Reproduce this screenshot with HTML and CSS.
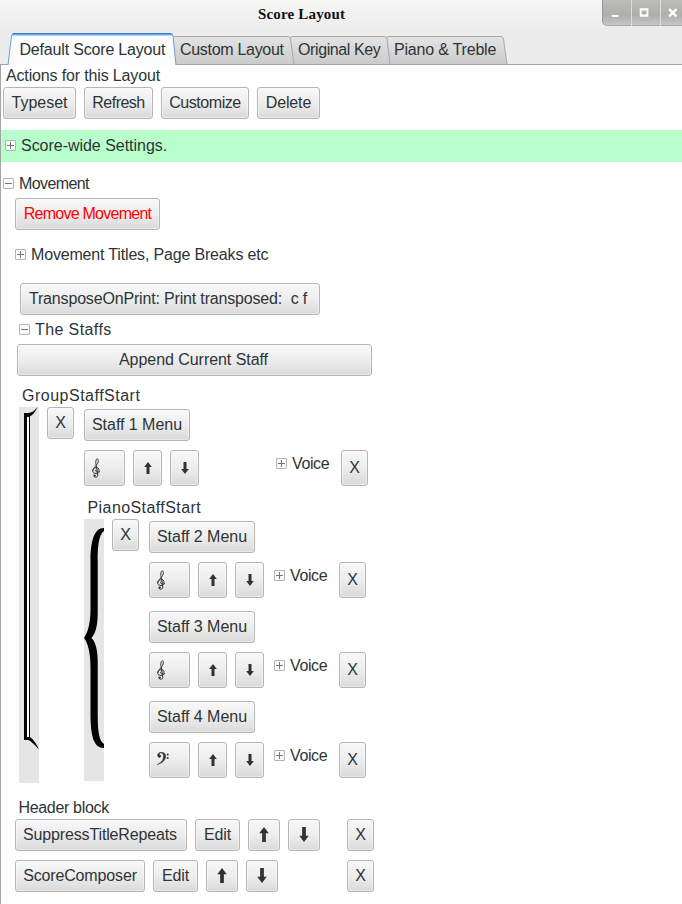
FILE: index.html
```html
<!DOCTYPE html>
<html lang="en">
<head>
<meta charset="utf-8">
<title>Score Layout</title>
<link rel="stylesheet" href="styles.css">
</head>
<body>
<svg class="defs" aria-hidden="true">
  <symbol id="up" viewBox="0 0 8 12"><path d="M4 0 7.800 5H5.500V12H2.500V5H.2Z"/></symbol>
  <symbol id="down" viewBox="0 0 8 12"><path d="M4 12 .2 7H2.500V0H5.500V7H7.800Z"/></symbol>
  <symbol id="treble" viewBox="0 0 9 20"><path fill="none" stroke="currentColor" stroke-width="1" d="M4.600 11.200C3.200 11.800 3.400 13.800 5 14 7.600 14 7.800 9.600 4.700 9.600 1.800 9.600.7 11.600.7 13 .7 16.300 7.500 16.200 7.500 13M.7 13C.7 9.500 6.700 6.700 6.300 2.500 6.100.3 5 .2 4.200 1.900 3.200 4.200 4.200 7 4.800 10L5.800 17.200C6 19.600 2.600 19.900 2 18"/><circle cx="2.600" cy="17.600" r="1.200"/></symbol>
  <symbol id="bass" viewBox="0 0 12 13"><path stroke="currentColor" stroke-width=".5" d="M.3 12.500C4.500 10.500 6.500 8 6.500 4.300 6.500 1.800 5.500 1 4.100 1 2.800 1 2 1.700 1.700 2.600 2.900 2.200 3.900 3.100 3.800 4.200 3.600 6 .7 5.800.6 3.500.5 1.300 2.300.3 4.400.3 7.200.3 8.700 2 8.700 4.300 8.700 8.300 4.700 11.500.3 12.500Z"/><circle cx="10.700" cy="2.500" r="1"/><circle cx="10.700" cy="5.900" r="1"/></symbol>
</svg>

<header class="titlebar">
  <h1 class="title">Score Layout</h1>
  <div class="controls">
    <svg class="control" viewBox="0 0 29 26"><path d="M9 15H16V17H9Z"/></svg>
    <svg class="control" viewBox="0 0 29 26"><path fill-rule="evenodd" d="M8 8H17V17H8ZM10 10.500V14.500H15V10.500Z"/></svg>
    <svg class="control" viewBox="0 0 29 26"><path class="cross" d="M8.500 9 16 16.500M16 9 8.500 16.500"/></svg>
  </div>
</header>

<nav class="tabs">
  <svg class="tab-shapes" viewBox="0 0 682 34">
    <defs>
      <linearGradient id="idle" x2="0" y2="1"><stop stop-color="#e4e4e4"/><stop offset="1" stop-color="#cbcbcb"/></linearGradient>
    </defs>
    <path class="baseline" d="M0 33.500H682"/>
    <path class="idle" d="M386 33V8Q386 5.500 389 5.500H501Q503 5.500 503.500 8L507 33"/>
    <path class="idle" d="M290 33V8Q290 5.500 293 5.500H384Q386.500 5.500 387 8L390 33"/>
    <path class="idle" d="M172 33V5.500H288Q290 5.500 290.500 8L294 33"/>
    <path class="current" d="M8 34 11.500 5Q12 2.500 14 2.500H170Q172.500 2.500 173 5L176 34"/>
    <path class="accent" d="M12 3.500H172.500"/>
    <path class="accent-top" d="M13 2.500H171.500"/>
  </svg>
  <span class="tab tab-default">Default Score Layout</span>
  <span class="tab tab-custom">Custom Layout</span>
  <span class="tab tab-key">Original Key</span>
  <span class="tab tab-piano">Piano &amp; Treble</span>
</nav>

<main class="page">
  <div class="label actions-label">Actions for this Layout</div>
  <div class="row actions">
    <button class="btn w73">Typeset</button>
    <button class="btn w69">Refresh</button>
    <button class="btn w88">Customize</button>
    <button class="btn w63">Delete</button>
  </div>

  <div class="expander scorewide"><i class="box plus"></i><span>Score-wide Settings.</span></div>
  <div class="expander movement"><i class="box"></i><span>Movement</span></div>
  <button class="btn remove">Remove Movement</button>
  <div class="expander titles"><i class="box plus"></i><span>Movement Titles, Page Breaks etc</span></div>
  <button class="btn transpose">TransposeOnPrint: Print transposed: &nbsp;c f</button>
  <div class="expander staffs"><i class="box"></i><span>The Staffs</span></div>
  <button class="btn append">Append Current Staff</button>

  <div class="label group-label">GroupStaffStart</div>
  <section class="group">
    <svg class="bracket" viewBox="0 0 20 376">
      <path d="M5 7V333H8V7ZM10 8V331H11V8Z"/>
      <path class="gap" d="M8 10H10V331H8Z"/>
      <path d="M5 10V6H9C13 6 16 3 18.500 0 16 5.500 13 9.500 8.500 10Z"/>
      <path d="M5 330H11C15 333 18 338 20 342.500 16.500 338.500 12 334 9 333H5Z"/>
    </svg>
    <button class="btn x">X</button>
    <div class="members">
      <button class="btn menu">Staff 1 Menu</button>
      <div class="row staff outer">
        <button class="btn clef"><svg class="treble"><use href="#treble"/></svg></button>
        <button class="btn move"><svg class="arrow"><use href="#up"/></svg></button>
        <button class="btn move"><svg class="arrow"><use href="#down"/></svg></button>
        <div class="expander voice"><i class="box plus"></i><span>Voice</span></div>
        <button class="btn x">X</button>
      </div>
      <div class="label piano-label">PianoStaffStart</div>
      <section class="group piano">
        <svg class="brace" viewBox="0 0 20 262">
          <path d="M20 9C10 9 6.500 22 6.500 42V90C6.500 104 4 113 0 119 4 124 6.500 134 6.500 148V195C6.500 218 10 229 20 229V225C15 222 13.700 212 13.700 195V142C13.700 130 11 122 7.500 119 11 115 13.700 108 13.700 94V42C13.700 22 16 15 20 12Z"/>
        </svg>
        <button class="btn x">X</button>
        <div class="members">
          <button class="btn menu">Staff 2 Menu</button>
          <div class="row staff">
            <button class="btn clef"><svg class="treble"><use href="#treble"/></svg></button>
            <button class="btn move"><svg class="arrow"><use href="#up"/></svg></button>
            <button class="btn move"><svg class="arrow"><use href="#down"/></svg></button>
            <div class="expander voice"><i class="box plus"></i><span>Voice</span></div>
            <button class="btn x">X</button>
          </div>
          <button class="btn menu">Staff 3 Menu</button>
          <div class="row staff">
            <button class="btn clef"><svg class="treble"><use href="#treble"/></svg></button>
            <button class="btn move"><svg class="arrow"><use href="#up"/></svg></button>
            <button class="btn move"><svg class="arrow"><use href="#down"/></svg></button>
            <div class="expander voice"><i class="box plus"></i><span>Voice</span></div>
            <button class="btn x">X</button>
          </div>
          <button class="btn menu">Staff 4 Menu</button>
          <div class="row staff">
            <button class="btn clef"><svg class="bass"><use href="#bass"/></svg></button>
            <button class="btn move"><svg class="arrow"><use href="#up"/></svg></button>
            <button class="btn move"><svg class="arrow"><use href="#down"/></svg></button>
            <div class="expander voice"><i class="box plus"></i><span>Voice</span></div>
            <button class="btn x">X</button>
          </div>
        </div>
      </section>
    </div>
  </section>

  <div class="label header-label">Header block</div>
  <div class="row header-row">
    <button class="btn w172">SuppressTitleRepeats</button>
    <button class="btn w45">Edit</button>
    <button class="btn w32"><svg class="arrow big"><use href="#up"/></svg></button>
    <button class="btn w32"><svg class="arrow big"><use href="#down"/></svg></button>
    <button class="btn x end">X</button>
  </div>
  <div class="row header-row">
    <button class="btn w130">ScoreComposer</button>
    <button class="btn w45">Edit</button>
    <button class="btn w32"><svg class="arrow big"><use href="#up"/></svg></button>
    <button class="btn w32"><svg class="arrow big"><use href="#down"/></svg></button>
    <button class="btn x end">X</button>
  </div>
</main>
</body>
</html>
```
FILE: styles.css
```css
* { box-sizing: border-box; }
html, body { height: 904px; overflow: hidden; }
body {
  margin: 0;
  background: #ececec;
  color: #2e3436;
  font: 16px/20px "Liberation Sans", Arial, sans-serif;
  letter-spacing: -0.15px;
}
svg { display: block; fill: currentColor; }
.defs { position: absolute; width: 0; height: 0; }

.titlebar {
  display: flex;
  height: 31px;
  overflow: hidden;
  background: linear-gradient(#f6f6f5, #ececec);
}
.title {
  flex: none;
  width: 602px;
  margin: 0;
  padding-left: 258px;
  color: #111;
  font: bold 15px/29px "Liberation Serif", serif;
  letter-spacing: 0.17px;
}
.controls {
  display: flex;
  flex: none;
  width: 89px;
  height: 26px;
  border: 1px solid #999;
  border-top: 0;
  border-bottom-color: #aaa;
  border-radius: 0 0 0 5px;
  background: linear-gradient(#bcbcba, #aeaeac 60%, #c6c6c4);
}
.control { flex: none; width: 29px; height: 26px; fill: #fff; border-right: 1px solid #ddd; }
.cross { stroke: #fff; stroke-width: 2.5; }

.tabs { position: relative; display: flex; height: 34px; }
.tab-shapes { position: absolute; inset: 0; width: 682px; height: 34px; }
.baseline { stroke: #9fa5a5; }
.idle { fill: url(#idle); stroke: #a4aaaa; }
.current { fill: #fcfcfc; stroke: #6a9fd6; }
.accent { fill: none; stroke: #63a7f0; stroke-width: 2; }
.accent-top { fill: none; stroke: #3a7bd0; }
.tab { position: relative; padding-top: 9px; white-space: nowrap; }
.tab-default { width: 160.5px; margin-left: 19.5px; letter-spacing: -0.18px; }
.tab-custom { width: 118px; letter-spacing: -0.3px; }
.tab-key { width: 96px; letter-spacing: -0.4px; }
.tab-piano { letter-spacing: -0.2px; }

.page {
  display: flex;
  flex-direction: column;
  align-items: flex-start;
  height: 839px;
  border-left: 1px solid #9fa5a5;
  background: #fff;
}
.label { height: 20px; white-space: nowrap; }
.row { display: flex; gap: 8px; }
.btn {
  display: flex;
  flex: none;
  align-items: center;
  justify-content: center;
  height: 32px;
  padding: 0 0 1px;
  border: 1px solid #b5b5b5;
  border-radius: 3px;
  background: linear-gradient(#f8f8f8, #ededed 50%, #dadada);
  box-shadow: inset 0 0 0 1px rgba(255, 255, 255, .4);
  color: inherit;
  font: inherit;
  letter-spacing: inherit;
  white-space: nowrap;
}
.w32 { width: 32px; }
.w45 { width: 45px; }
.w63 { width: 63px; }
.w69 { width: 69px; letter-spacing: -0.5px; }
.w73 { width: 73px; letter-spacing: 0; }
.w88 { width: 88px; letter-spacing: -0.45px; }
.w130 { width: 130px; }
.w172 { width: 172px; padding-right: 2px; }
.x { width: 27px; }

.expander { display: flex; align-items: center; gap: 5px; height: 20px; white-space: nowrap; }
.box {
  flex: none;
  width: 11px;
  height: 11px;
  margin-bottom: 1px;
  border: 1px solid #b4b4b4;
  border-radius: 1px;
  background: linear-gradient(#777, #777) center / 7px 1px no-repeat, #fbfbfb;
}
.plus {
  background:
    linear-gradient(#777, #777) center / 7px 1px no-repeat,
    linear-gradient(#777, #777) center / 1px 7px no-repeat,
    #fbfbfb;
}

.actions-label { margin: 1px 0 1px 5px; }
.actions { margin-left: 2px; }
.scorewide { align-self: stretch; height: 32px; margin-top: 11px; padding-left: 4px; background: #b9ffcb; letter-spacing: -0.03px; }
.movement { margin: 12px 0 4px 2px; letter-spacing: -0.6px; }
.remove { width: 145px; margin-left: 14px; color: #f00; letter-spacing: -0.75px; }
.titles { margin: 15px 0 18px 14px; letter-spacing: -0.17px; }
.transpose { width: 300px; margin-left: 19px; padding-right: 4px; letter-spacing: -0.17px; }
.staffs { margin: 5px 0 4px 18px; letter-spacing: 0.4px; }
.append { width: 355px; margin-left: 16px; padding-right: 2px; letter-spacing: -0.05px; }
.group-label { margin: 10px 0 1px 21px; letter-spacing: 0.5px; }

.group { display: flex; align-items: flex-start; height: 376px; margin-left: 18px; }
.bracket, .brace { flex: none; width: 20px; margin-right: 8px; background: #e5e5e5; fill: #000; }
.bracket { height: 376px; }
.brace { height: 262px; }
.gap { fill: #fff; }
.members { margin: 2px 0 0 10px; }
.menu { width: 106px; letter-spacing: -0.03px; }
.staff { margin: 9px 0 13px; }
.staff .btn { height: 36px; }
.clef { width: 41px; justify-content: flex-start; padding-left: 7px; }
.move { width: 29px; }
.voice { width: 56px; margin: 4px 1px 0 2px; letter-spacing: -0.4px; }
.outer { margin-bottom: 12px; }
.outer .voice { margin-left: 69px; }
.treble { width: 9px; height: 20px; }
.bass { width: 12px; height: 13px; margin-bottom: 3px; }
.arrow { width: 8px; height: 12px; }
.big { width: 10px; height: 15px; }

.piano-label { margin: 0 0 1px 3.5px; letter-spacing: 0.42px; }
.piano { height: 262px; margin-left: 0; }

.header-label { margin: 15px 0 1px 17.5px; letter-spacing: -0.33px; }
.header-row { width: 359px; margin: 0 0 9px 14px; }
.end { margin-left: auto; }
```
